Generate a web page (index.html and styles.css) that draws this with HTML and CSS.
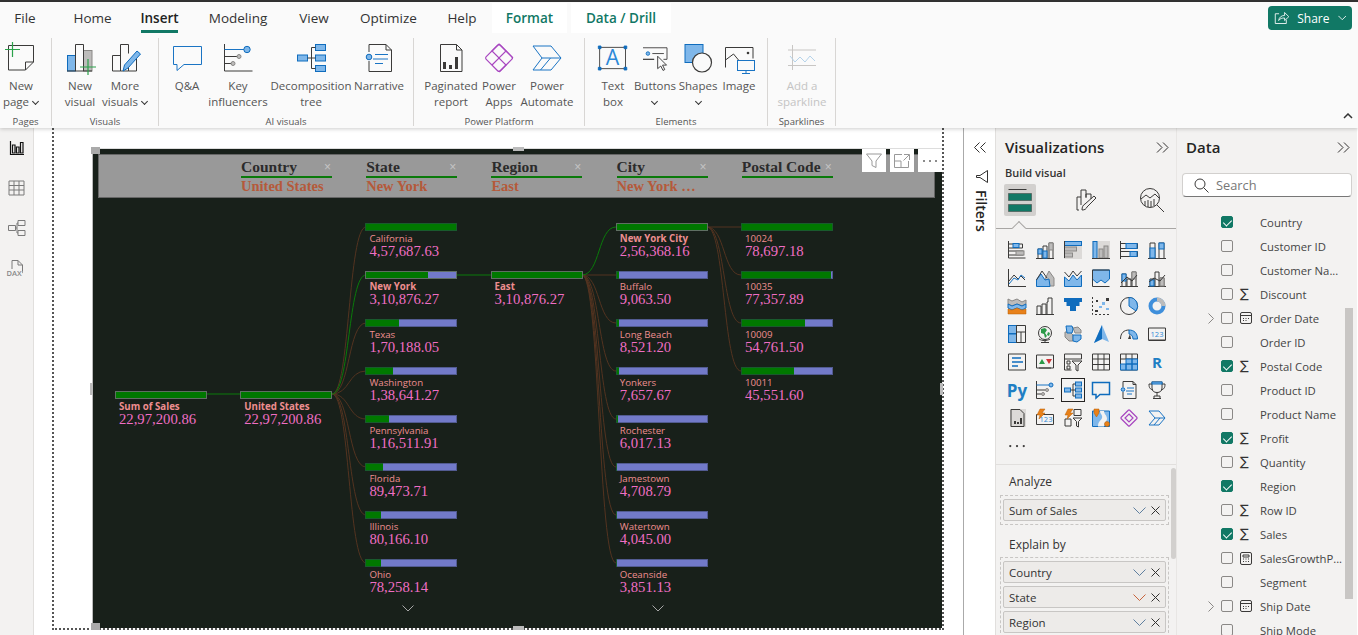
FILE: index.html
```html
<!DOCTYPE html>
<html lang="en">
<head>
    <meta charset="UTF-8">
    <title>Power BI Desktop - Insert</title>
    <link rel="stylesheet" href="styles.css">
</head>
<body>

<div class="topline"></div>

<header class="ribbon">
    <nav class="tabs">
        <span class="tab tab-file">File</span>
        <span class="tab tab-home">Home</span>
        <span class="tab tab-insert active">Insert</span>
        <span class="tab tab-modeling">Modeling</span>
        <span class="tab tab-view">View</span>
        <span class="tab tab-optimize">Optimize</span>
        <span class="tab tab-help">Help</span>
        <span class="tab tab-ctx tab-format">Format</span>
        <span class="tab tab-ctx tab-drill">Data / Drill</span>
        <button class="share">
            <svg width="18" height="16" viewBox="0 0 18 16"><path class="wh" d="M6 3H1.500v11.500h13V10M5.500 11c.5-4 3.500-6 7-6V1.500l5 5-5 4.500V8c-3 0-5.500.5-7 3z"/></svg>
            Share
            <svg width="10" height="6" viewBox="0 0 10 6"><path class="wh" d="M.5.500 5 5 9.500.5"/></svg>
        </button>
    </nav>
    <div class="groups">
        <section class="group g-pages">
            <div class="btns">
                <div class="rbtn w-42">
                    <svg class="ric" viewBox="0 0 32 32"><path class="d" d="M3.500 3.500h25V20l-8 8h-17zM20.500 28v-8h8"/><path class="plus" d="M0 7.500h15M7.500 0v15"/></svg>
                    <span>New<br>page <i class="chev"></i></span>
                </div>
            </div>
            <small>Pages</small>
        </section>
        <section class="group g-visuals">
            <div class="btns">
                <div class="rbtn w-44">
                    <svg class="ric" viewBox="0 0 32 32"><rect class="bl" x="3.500" y="13.500" width="8" height="15.500"/><rect class="gr" x="19.500" y="8.500" width="8.500" height="20.500"/><path class="d" d="M11.500 29V2.500h8V29M3 29h25"/><path class="plus" d="M16 25h16M24 17v16"/></svg>
                    <span>New<br>visual</span>
                </div>
                <div class="rbtn w-46">
                    <svg class="ric" viewBox="0 0 32 32"><path class="d" d="M11.500 13.500h-8V29h8V2.500h8v9M19.500 22v7h-8M27.500 16v13h-8"/><path class="bl" d="M14 29l1.500-6L28 9l3.500 3L19 26z"/></svg>
                    <span>More<br>visuals <i class="chev"></i></span>
                </div>
            </div>
            <small>Visuals</small>
        </section>
        <section class="group g-ai">
            <div class="btns">
                <div class="rbtn w-44">
                    <svg class="ric" viewBox="0 0 32 32"><path class="bs" d="M2.500 4.500h28v18H13l-7 6v-6H2.500z"/></svg>
                    <span>Q&amp;A</span>
                </div>
                <div class="rbtn w-58">
                    <svg class="ric" viewBox="0 0 32 32"><path class="d" d="M2.500 2v27h28M2.500 14.500h14M2.500 21.500h8"/><path class="bs" d="M2.500 7.500h20"/><circle class="bl" cx="25" cy="7.500" r="3.200"/><circle class="gr" cx="17" cy="14.500" r="2"/><circle class="gr" cx="11" cy="21.500" r="2"/></svg>
                    <span>Key<br>influencers</span>
                </div>
                <div class="rbtn w-88">
                    <svg class="ric" viewBox="0 0 32 32"><rect class="bl" x="2.500" y="13" width="10" height="6"/><rect class="bl" x="20.500" y="2.500" width="10" height="6"/><rect class="bl" x="20.500" y="13" width="10" height="6"/><rect class="bl" x="20.500" y="23.500" width="10" height="6"/><path class="d" d="M12.500 16h8M16.500 16V5.500h4M16.500 16v10.500h4"/></svg>
                    <span>Decomposition<br>tree</span>
                </div>
                <div class="rbtn w-48">
                    <svg class="ric" viewBox="0 0 32 32"><path class="d" d="M6 10V2.500h17l5.500 5.500v21.500H6V19M23 2.500V8h5.500"/><circle class="bl" cx="6" cy="15" r="2.800"/><path class="bs" d="M12 12.500h13M10 17h15M12 21.500h8"/></svg>
                    <span>Narrative</span>
                </div>
            </div>
            <small>AI visuals</small>
        </section>
        <section class="group g-platform">
            <div class="btns">
                <div class="rbtn w-60">
                    <svg class="ric" viewBox="0 0 32 32"><path class="d" d="M5.500 2.500h16l5.500 5.500v21.500H5.500zM21.500 2.500V8H27"/><path class="fd" d="M8 27v-7h3v7zM14 27v-4h3v4zM20 27V15h3v12z"/></svg>
                    <span>Paginated<br>report</span>
                </div>
                <div class="rbtn w-36">
                    <svg class="ric" viewBox="0 0 32 32"><g class="pa"><rect x="6" y="6" width="20" height="20" rx="2" transform="rotate(45 16 16)"/><path d="M16 2l7 7-7 7-7-7zM23 9l7 7M9 23l7-7 7 7-7 7"/></g></svg>
                    <span>Power<br>Apps</span>
                </div>
                <div class="rbtn w-60">
                    <svg class="ric" viewBox="0 0 32 32"><path class="bs" d="M2 4h18l10 12-10 12H2l9-12zM11 16h19M9.500 28l10-12"/></svg>
                    <span>Power<br>Automate</span>
                </div>
            </div>
            <small>Power Platform</small>
        </section>
        <section class="group g-elements">
            <div class="btns">
                <div class="rbtn w-36">
                    <svg class="ric" viewBox="0 0 36 32"><rect class="d" x="3" y="4" width="29" height="24"/><text class="tb-a" x="17.500" y="24">A</text><path class="hnd" d="M1.500 2.500h3v3h-3zM30.500 2.500h3v3h-3zM1.500 26.500h3v3h-3zM30.500 26.500h3v3h-3z"/></svg>
                    <span>Text<br>box</span>
                </div>
                <div class="rbtn w-48">
                    <svg class="ric" viewBox="0 0 36 32"><path class="d" d="M4.500 4.500h27v13h-4M17 17.500H4.500z"/><circle class="bl" cx="10" cy="11" r="2"/><path class="d" d="M15 11h13"/><path class="cur" d="M21 14v14l3.500-3 2.500 5 2-1-2.500-5H31z"/></svg>
                    <span>Buttons<br><i class="chev"></i></span>
                </div>
                <div class="rbtn w-38">
                    <svg class="ric" viewBox="0 0 32 32"><rect class="bl" x="3" y="2.500" width="18" height="18"/><circle class="sc" cx="20" cy="20.500" r="9.500"/></svg>
                    <span>Shapes<br><i class="chev"></i></span>
                </div>
                <div class="rbtn w-44">
                    <svg class="ric" viewBox="0 0 32 32"><path class="d" d="M2.500 25.500v-20h27.500v11M2.500 18l8-6 5 6"/><circle class="fd" cx="25" cy="11" r="1.300"/><rect class="mon" x="14.500" y="18.500" width="17" height="10"/><path class="bs" d="M23 28.500v3M19 31.500h8"/></svg>
                    <span>Image</span>
                </div>
            </div>
            <small>Elements</small>
        </section>
        <section class="group g-sparks">
            <div class="btns">
                <div class="rbtn w-60 off">
                    <svg class="ric" viewBox="0 0 32 32"><path class="off-l" d="M6.500 3v25M2 8h28M2 23.500h28"/><path class="off-b" d="M4 14l5 6 5-5 5 5 5-6 5 5"/></svg>
                    <span>Add a<br>sparkline</span>
                </div>
            </div>
            <small>Sparklines</small>
        </section>
        <svg class="collapse" width="10" height="6" viewBox="0 0 10 6"><path d="M1 5l4-4 4 4"/></svg>
    </div>
</header>

<main class="main">
    <aside class="rail">
        <svg width="16" height="16" viewBox="0 0 16 16"><path class="k" d="M1.500 1v13.500H15M3.500 13V5h2.500v8zM7.500 13V7h2.500v6zM11.500 13V2.500H14V13z"/></svg>
        <svg width="17" height="16" viewBox="0 0 17 16"><path class="r" d="M1 1h15v14H1zM1 5.500h15M1 10h15M6 1v14M11 1v14"/></svg>
        <svg width="18" height="16" viewBox="0 0 18 16"><path class="r" d="M.5 5.500h7v5h-7zM10 .5h7v5h-7zM10 10.500h7v5h-7zM7.500 8H9V3h1M9 8v5h1"/></svg>
        <div class="dax">
            <svg width="18" height="17" viewBox="0 0 18 17"><path class="r" d="M4 10V.5h6l4.500 4.500v6.500c0 1-.5 2-1.500 2.500M10 .5V5h4.500"/></svg>
            <span>DAX</span>
        </div>
    </aside>

    <section class="canvas">
        <div class="page">
            <div class="visual">
                <i class="h h-tl"></i><i class="h h-bl"></i><i class="h h-tm"></i><i class="h h-bm"></i><i class="h h-lm"></i><i class="h h-rm"></i>

                <div class="vtools">
                    <span><svg width="16" height="16" viewBox="0 0 16 16"><path d="M.5 1h15L10 8v6.500l-4-2V8z"/></svg></span>
                    <span><svg width="16" height="14" viewBox="0 0 16 14"><path d="M8 .5H.5v13h14V7M.5 7H7v6.500M10 .5h5.500V6M15 1L9.500 6.500"/></svg></span>
                    <span><svg width="16" height="4" viewBox="0 0 16 4"><circle class="fg" cx="2" cy="2" r="1"/><circle class="fg" cx="8" cy="2" r="1"/><circle class="fg" cx="14" cy="2" r="1"/></svg></span>
                </div>

                <div class="crumbs">
                    <div class="crumb"><div class="crumb-name"><b>Country</b><i>&times;</i></div><div class="crumb-val">United States</div></div>
                    <div class="crumb"><div class="crumb-name"><b>State</b><i>&times;</i></div><div class="crumb-val">New York</div></div>
                    <div class="crumb"><div class="crumb-name"><b>Region</b><i>&times;</i></div><div class="crumb-val">East</div></div>
                    <div class="crumb"><div class="crumb-name"><b>City</b><i>&times;</i></div><div class="crumb-val">New York &hellip;</div></div>
                    <div class="crumb"><div class="crumb-name"><b>Postal Code</b><i>&times;</i></div></div>
                </div>

                <svg class="links" viewBox="92 148 851 480">
                    <g class="lb">
                        <path d="M332 394C350 394 348 227 366 227"/>
                        <path d="M332 394C350 394 348 323 366 323"/>
                        <path d="M332 394C350 394 348 371 366 371"/>
                        <path d="M332 394C350 394 348 419 366 419"/>
                        <path d="M332 394C350 394 348 467 366 467"/>
                        <path d="M332 394C350 394 348 515 366 515"/>
                        <path d="M332 394C350 394 348 563 366 563"/>
                        <path d="M582 275H616"/>
                        <path d="M582 275C600 275 598 323 616 323"/>
                        <path d="M582 275C600 275 598 371 616 371"/>
                        <path d="M582 275C600 275 598 419 616 419"/>
                        <path d="M582 275C600 275 598 467 616 467"/>
                        <path d="M582 275C600 275 598 515 616 515"/>
                        <path d="M582 275C600 275 598 563 616 563"/>
                        <path d="M707 227H741"/>
                        <path d="M707 227C725 227 723 275 741 275"/>
                        <path d="M707 227C725 227 723 323 741 323"/>
                        <path d="M707 227C725 227 723 371 741 371"/>
                    </g>
                    <g class="lg">
                        <path d="M207 394H240"/>
                        <path d="M332 394C350 394 348 275 366 275"/>
                        <path d="M457 275H491"/>
                        <path d="M582 275C600 275 598 227 616 227"/>
                    </g>
                </svg>

                <div class="tree">
                    <div class="col col-root">
                        <div class="item sel"><div class="bar"><div class="fill" style="width:100%"></div></div><p class="lbl"><b>Sum of Sales</b></p><p class="val">22,97,200.86</p></div>
                    </div>
                    <div class="col col-root">
                        <div class="item sel"><div class="bar"><div class="fill" style="width:100%"></div></div><p class="lbl"><b>United States</b></p><p class="val">22,97,200.86</p></div>
                    </div>
                    <div class="col">
                        <div class="item"><div class="bar"><div class="fill" style="width:100%"></div></div><p class="lbl">California</p><p class="val">4,57,687.63</p></div>
                        <div class="item sel"><div class="bar"><div class="fill" style="width:68%"></div></div><p class="lbl"><b>New York</b></p><p class="val">3,10,876.27</p></div>
                        <div class="item"><div class="bar"><div class="fill" style="width:37%"></div></div><p class="lbl">Texas</p><p class="val">1,70,188.05</p></div>
                        <div class="item"><div class="bar"><div class="fill" style="width:30%"></div></div><p class="lbl">Washington</p><p class="val">1,38,641.27</p></div>
                        <div class="item"><div class="bar"><div class="fill" style="width:25.5%"></div></div><p class="lbl">Pennsylvania</p><p class="val">1,16,511.91</p></div>
                        <div class="item"><div class="bar"><div class="fill" style="width:19.5%"></div></div><p class="lbl">Florida</p><p class="val">89,473.71</p></div>
                        <div class="item"><div class="bar"><div class="fill" style="width:17.5%"></div></div><p class="lbl">Illinois</p><p class="val">80,166.10</p></div>
                        <div class="item"><div class="bar"><div class="fill" style="width:17%"></div></div><p class="lbl">Ohio</p><p class="val">78,258.14</p></div>
                    </div>
                    <div class="col col-east">
                        <div class="item sel"><div class="bar"><div class="fill" style="width:100%"></div></div><p class="lbl"><b>East</b></p><p class="val">3,10,876.27</p></div>
                    </div>
                    <div class="col">
                        <div class="item sel"><div class="bar"><div class="fill" style="width:100%"></div></div><p class="lbl"><b>New York City</b></p><p class="val">2,56,368.16</p></div>
                        <div class="item"><div class="bar"><div class="fill" style="width:3.5%"></div></div><p class="lbl">Buffalo</p><p class="val">9,063.50</p></div>
                        <div class="item"><div class="bar"><div class="fill" style="width:3.3%"></div></div><p class="lbl">Long Beach</p><p class="val">8,521.20</p></div>
                        <div class="item"><div class="bar"><div class="fill" style="width:3%"></div></div><p class="lbl">Yonkers</p><p class="val">7,657.67</p></div>
                        <div class="item"><div class="bar"><div class="fill" style="width:2.3%"></div></div><p class="lbl">Rochester</p><p class="val">6,017.13</p></div>
                        <div class="item"><div class="bar"><div class="fill" style="width:1.8%"></div></div><p class="lbl">Jamestown</p><p class="val">4,708.79</p></div>
                        <div class="item"><div class="bar"><div class="fill" style="width:1.6%"></div></div><p class="lbl">Watertown</p><p class="val">4,045.00</p></div>
                        <div class="item"><div class="bar"><div class="fill" style="width:1.5%"></div></div><p class="lbl">Oceanside</p><p class="val">3,851.13</p></div>
                    </div>
                    <div class="col">
                        <div class="item"><div class="bar"><div class="fill" style="width:100%"></div></div><p class="lbl">10024</p><p class="val">78,697.18</p></div>
                        <div class="item"><div class="bar"><div class="fill" style="width:98.3%"></div></div><p class="lbl">10035</p><p class="val">77,357.89</p></div>
                        <div class="item"><div class="bar"><div class="fill" style="width:69.6%"></div></div><p class="lbl">10009</p><p class="val">54,761.50</p></div>
                        <div class="item"><div class="bar"><div class="fill" style="width:57.9%"></div></div><p class="lbl">10011</p><p class="val">45,551.60</p></div>
                    </div>
                </div>
                <svg class="more more-a" width="12" height="7" viewBox="0 0 12 7"><path d="M.5.500 6 6 11.500.5"/></svg>
                <svg class="more more-b" width="12" height="7" viewBox="0 0 12 7"><path d="M.5.500 6 6 11.500.5"/></svg>
            </div>
        </div>
    </section>

    <aside class="filters">
        <svg width="12" height="11" viewBox="0 0 12 11"><path class="n" d="M5.500.5l-5 5 5 5M11.500.5l-5 5 5 5"/></svg>
        <svg class="f-ico" width="12" height="13" viewBox="0 0 12 13"><path class="n" d="M11.500.5v12L4 7.500H.5v-2H4z"/></svg>
        <span class="f-text">Filters</span>
    </aside>

    <aside class="viz">
        <div class="panel-head"><h2>Visualizations</h2><svg width="13" height="11" viewBox="0 0 13 11"><path class="n" d="M1 .5l5 5-5 5M7 .5l5 5-5 5"/></svg></div>
        <h3 class="build">Build visual</h3>
        <div class="viz-tabs">
            <span class="vt vt-on"><svg width="24" height="24" viewBox="0 0 24 24"><path class="d" d="M.5 1.500h18"/><rect class="wf" x=".5" y="5.500" width="23" height="7"/><rect class="wf" x=".5" y="16.500" width="23" height="7"/></svg></span>
            <span class="vt"><svg width="22" height="24" viewBox="0 0 22 24"><path class="d" d="M4 22H2V9h4V2h5v7M11 10V6h5v5M6 9v8"/><path class="d" d="M7 22c3 0 4-1 5-3l9-9-2-2-9 8c-2 1-3 3-3 6z"/></svg></span>
            <span class="vt"><svg width="26" height="26" viewBox="0 0 26 26"><circle class="d" cx="11" cy="11" r="9.500"/><path class="d" d="M18 18l7 7M2 12l5-4 4 3 5-4 4 4"/><path class="d" d="M6 14v5M9 13v7M12 14v6M15 12v7"/></svg></span>
        </div>
        <div class="vline"><i></i></div>

        <div class="vgrid">
            <span><svg viewBox="0 0 18 18"><path class="d" d="M.5 0v17h17M.5 3h14v4H.5M.5 10h15v4H.5"/><rect class="bl" x="5" y="2.500" width="6" height="4"/><rect class="gr" x="8" y="10" width="8" height="4"/></svg></span>
            <span><svg viewBox="0 0 18 18"><path class="d" d="M0 17.500h18M2 17V8h4v9M7 17V5h4v12M13 17V2h4v15"/><rect class="bl" x="2" y="8" width="4" height="5"/><rect class="bl" x="7" y="10" width="4" height="7"/><rect class="gr" x="13" y="2" width="4" height="7"/></svg></span>
            <span><svg viewBox="0 0 18 18"><rect class="gb" width="18" height="18"/><rect class="bl" x=".5" y=".5" width="17" height="4"/><rect class="gr" x=".5" y="6" width="12" height="4"/><rect class="gr" x=".5" y="12" width="8" height="4"/><path class="d" d="M.5 0v17"/></svg></span>
            <span><svg viewBox="0 0 18 18"><rect class="gb" width="18" height="18"/><rect class="bl" x="1" y=".5" width="4" height="17"/><rect class="gr" x="7" y="8" width="4" height="9"/><rect class="gr" x="12" y="5" width="4" height="12"/><path class="d" d="M0 17.500h18"/></svg></span>
            <span><svg viewBox="0 0 18 18"><path class="d" d="M.5 0v18M.5 2.500h17v5H.5M.5 10.500h17v5H.5"/><rect class="bl" x="6" y="2.500" width="11" height="5"/><rect class="bl" x="10" y="10.500" width="7" height="5"/></svg></span>
            <span><svg viewBox="0 0 18 18"><path class="d" d="M0 17.500h18M2 17V2h5v15M11 17V2h5v15"/><rect class="bl" x="2" y="7" width="5" height="10"/><rect class="bl" x="11" y="2" width="5" height="6"/></svg></span>

            <span><svg viewBox="0 0 18 18"><path class="d" d="M.5 0v17.500H18M1 12l5-6 4 4 3-3 4 4"/><path class="bs" d="M1 15l5-6 4 2 3-5 4 3"/></svg></span>
            <span><svg viewBox="0 0 18 18"><path class="gr" d="M9 10l4-8 5 7v8H9z"/><path class="bl" d="M.5 17.500v-7L5 5l4 6 4-1 1 7.500z"/><path class="d" d="M.5 11L6 2l5 7"/></svg></span>
            <span><svg viewBox="0 0 18 18"><path class="bl" d="M.5 8L5 12l4-6 4 5 4.500-5v11.500H.5z"/><path class="d" d="M.5 3L5 8l4-6 4 5 4.500-5"/></svg></span>
            <span><svg viewBox="0 0 18 18"><path class="bl" d="M.5 1v9L5 14l4-3 4 3 4.500-4V1z"/><path class="d" d="M.5 1h17M.5 1v16.500h17"/></svg></span>
            <span><svg viewBox="0 0 18 18"><path class="d" d="M0 17.500h18M2 17V5h4v12M7 17V10h4v7M12 17V3h4v14"/><rect class="bl" x="2" y="5" width="4" height="7"/><rect class="gr" x="12" y="3" width="4" height="7"/><path class="d" d="M1 14l6-6 5 4 5-6"/></svg></span>
            <span><svg viewBox="0 0 18 18"><path class="d" d="M0 17.500h18M2 17v-7h4v7M7 17V3h4v14M12 17V9h4v8"/><rect class="gr" x="12" y="9" width="4" height="8"/><rect class="bl" x="2" y="11" width="4" height="6"/><path class="d" d="M1 13l5-4 6 3 5-6"/></svg></span>

            <span><svg viewBox="0 0 18 18"><path class="gr" d="M0 2l4 2 5-2 5 3 4-2v4l-4 2-5-2-5 2-4-2z"/><path class="bl" d="M0 7l4 2 5-2 5 2 4-2v4l-4 2-5-2-5 2-4-2z"/><path class="or" d="M0 12l4 1 5-2 5 2 4-1v5H0z"/></svg></span>
            <span><svg viewBox="0 0 18 18"><path class="d" d="M0 17.500h18M1 17V9h4v8M6 17V7h4v10M11 17V5h1M16 17V1h-4v4"/></svg></span>
            <span><svg viewBox="0 0 18 18"><path class="fb" d="M0 1h18v4h-2.500v4H12v5H6V9H2.500V5H0z"/></svg></span>
            <span><svg viewBox="0 0 18 18"><path class="d" d="M.5 0v17.500H18" stroke-dasharray="2 2"/><rect class="fd" x="3" y="13" width="3" height="2"/><rect class="fl" x="7" y="9" width="3" height="2"/><rect class="fl" x="10" y="5" width="3" height="3"/><rect class="fd" x="14" y="1" width="3" height="3"/><rect class="fl" x="14" y="11" width="3" height="2"/><rect class="fd" x="4" y="3" width="2" height="2"/></svg></span>
            <span><svg viewBox="0 0 18 18"><circle class="d" cx="9" cy="9" r="8.500"/><path class="bl" d="M9 .5A8.500 8.500 0 0 1 16 14L9 9z"/></svg></span>
            <span><svg viewBox="0 0 18 18"><circle class="ring" cx="9" cy="9" r="6.500"/><path class="ring2" d="M9 2.500A6.500 6.500 0 0 1 15.500 9"/></svg></span>

            <span><svg viewBox="0 0 18 18"><rect class="bl" x=".5" y=".5" width="8" height="8"/><rect class="bl" x=".5" y="9" width="8" height="8.500"/><path class="d" d="M8.500.5h9v17h-9zM8.500 7h9M13 7v10.500"/></svg></span>
            <span><svg viewBox="0 0 18 18"><circle class="d" cx="9" cy="8" r="6.500"/><path class="gn" d="M5 4l4-1 2 2-2 3 2 3-2 2-1-4-3-1zM12 7l2 1-1 3-2-1z"/><path class="d" d="M3 14c3 2 8 2 11 0M9 15v2M5 17.500h8"/></svg></span>
            <span><svg viewBox="0 0 18 18"><path class="gr" d="M1 7h5l3 3v6H5l-2-2-2-2zM9 3l5-1 3 3v3h-6z"/><path class="bl" d="M2 1h6l1 3-1 4H3zM9 10h8v4l-4 3-4-1z"/></svg></span>
            <span><svg viewBox="0 0 18 18"><path class="fl" d="M10 0l7 17-7-3-8 4z"/><path class="fb" d="M10 0v14l-8 4z"/></svg></span>
            <span><svg viewBox="0 0 18 18"><path class="d" d="M.5 14C.5 8 4 5 9 5"/><path class="bl" d="M9 5c5 0 8.500 3 8.500 9H13c0-3-2-5-4-5z"/><path class="fd" d="M8 14l2-5 1 5z"/></svg></span>
            <span><svg viewBox="0 0 18 18"><path class="d" d="M.5 3h17v12H.5zM.5 15.500h17"/><text class="t123" x="9" y="12">123</text></svg></span>

            <span><svg viewBox="0 0 18 18"><path class="d" d="M.5 1h17v16H.5z"/><path class="bs2" d="M4 5h9M4 9h11M4 13h6"/></svg></span>
            <span><svg viewBox="0 0 18 18"><path class="d" d="M.5 2h17v13H.5zM3 15h12"/><path class="gn" d="M3 11l3-5 3 5z"/><path class="rd" d="M10 6h6l-3 5z"/></svg></span>
            <span><svg viewBox="0 0 18 18"><path class="d" d="M.5 1h17v5H.5M.5 1v16h7M3 8h3v3H3zM3 13h3v3H3z"/><path class="d" d="M8 8h10l-4 4v6l-2-1v-5z"/></svg></span>
            <span><svg viewBox="0 0 18 18"><path class="d" d="M.5 1h17v16H.5zM.5 6h17M.5 11.500h17M6 1v16M12 1v16"/></svg></span>
            <span><svg viewBox="0 0 18 18"><path class="d" d="M.5 1h17v16H.5zM.5 6h17M6 1v5M12 1v5"/><path class="bl" d="M.5 11H6v6H.5zM6 6h6v5H6zM12 6h5.500v5H12zM6 11h6v6H6zM12 11h5.500v6H12z"/></svg></span>
            <span class="letter">R</span>

            <span class="letter letter-py">Py</span>
            <span><svg viewBox="0 0 18 18"><path class="d" d="M.5 0v17.500H18M.5 9h9M.5 13h5"/><path class="bs" d="M.5 4h13"/><circle class="bl" cx="15" cy="4" r="2"/><circle class="gr" cx="11" cy="9" r="1.500"/><circle class="gr" cx="7" cy="13" r="1.500"/></svg></span>
            <span class="picked"><svg viewBox="0 0 18 18"><rect class="bl" x=".5" y="7" width="6" height="4"/><rect class="bl" x="11.500" y="1" width="6" height="4"/><rect class="bl" x="11.500" y="7" width="6" height="4"/><rect class="bl" x="11.500" y="13" width="6" height="4"/><path class="d" d="M6.500 9h5M9 9V3h2.500M9 9v6h2.500"/></svg></span>
            <span><svg viewBox="0 0 18 18"><path class="bs2" d="M.5 1.500h17v12H8L4 17v-3.500H.5z"/></svg></span>
            <span><svg viewBox="0 0 18 18"><path class="d" d="M3 6V.5h10l3 3v14H3V11M13 .5v3h3"/><circle class="bl" cx="3" cy="8.500" r="1.800"/><path class="bs" d="M7 7h7M6 10h8M7 13h5"/></svg></span>
            <span><svg viewBox="0 0 18 18"><path class="d" d="M4 1h10v6c0 3-2 4.500-5 4.500S4 10 4 7zM4 3H1c0 4 1 5 4 6M14 3h3c0 4-1 5-4 6M9 11.500V15M5 17.500h8M6 17v-2h6v2"/><rect class="bl" x="4" y="1" width="10" height="2"/></svg></span>

            <span><svg viewBox="0 0 18 18"><rect class="gb" x="2" width="16" height="18"/><path class="d" d="M3 .5h9l4 4v13H3z"/><path class="fd" d="M6 15v-3h2v3zM9 15v-2h2v2zM12 15V9h2v6z"/></svg></span>
            <span><svg viewBox="0 0 18 18"><path class="d" d="M.5 5.500h17v10H.5z"/><text class="t123" x="10" y="13">123</text><path class="or" d="M4 0h5L6 4h3L3 10l1-4H1z"/></svg></span>
            <span><svg viewBox="0 0 18 18"><path class="d" d="M10 .5h7v6h-7zM1 10h6v7H1zM9 9h9l-3.500 3.500V18l-2-1v-4.500z"/><path class="or" d="M4 0h5L6 4h3L3 10l1-4H1z"/></svg></span>
            <span><svg viewBox="0 0 18 18"><path class="bl" d="M.5 2h17v15.500H.5z"/><path class="wp" d="M8 2c0 3 3 4 2 7s-4 3-4 8.500h6c0-4 3-5 3-8S12 5 12 2z"/><path class="or" d="M2 0h5v4L4.500 8 2 4z"/><circle class="or" cx="15" cy="15" r="2.500"/></svg></span>
            <span><svg viewBox="0 0 18 18"><g class="pa"><rect x="3" y="3" width="12" height="12" rx="1" transform="rotate(45 9 9)"/><path d="M9 5l4 4-4 4-4-4z"/></g></svg></span>
            <span><svg viewBox="0 0 18 18"><path class="bs" d="M1 2h10l6 7-6 7H1l6-7zM7 9h10M6 16l6-7"/></svg></span>

            <span><svg width="16" height="4" viewBox="0 0 16 4"><circle class="fd" cx="2" cy="2" r="1"/><circle class="fd" cx="8" cy="2" r="1"/><circle class="fd" cx="14" cy="2" r="1"/></svg></span>
        </div>

        <div class="fields">
            <h4>Analyze</h4>
            <div class="well">
                <div class="pill"><span>Sum of Sales</span><svg width="13" height="7" viewBox="0 0 13 7"><path class="ch" d="M.5.500l6 6 6-6"/></svg><svg class="pill-x" width="9" height="9" viewBox="0 0 9 9"><path class="n" d="M.5.500l8 8M8.500.5l-8 8"/></svg></div>
            </div>
            <h4 class="h4-next">Explain by</h4>
            <div class="well well-open">
                <div class="pill"><span>Country</span><svg width="13" height="7" viewBox="0 0 13 7"><path class="ch" d="M.5.500l6 6 6-6"/></svg><svg class="pill-x" width="9" height="9" viewBox="0 0 9 9"><path class="n" d="M.5.500l8 8M8.500.5l-8 8"/></svg></div>
                <div class="pill"><span>State</span><svg width="13" height="7" viewBox="0 0 13 7"><path class="bo" d="M.5.500l6 6 6-6"/></svg><svg class="pill-x" width="9" height="9" viewBox="0 0 9 9"><path class="n" d="M.5.500l8 8M8.500.5l-8 8"/></svg></div>
                <div class="pill"><span>Region</span><svg width="13" height="7" viewBox="0 0 13 7"><path class="ch" d="M.5.500l6 6 6-6"/></svg><svg class="pill-x" width="9" height="9" viewBox="0 0 9 9"><path class="n" d="M.5.500l8 8M8.500.5l-8 8"/></svg></div>
            </div>
            <i class="sb sb-viz"></i>
        </div>
    </aside>

    <aside class="data">
        <div class="panel-head"><h2>Data</h2><svg width="13" height="11" viewBox="0 0 13 11"><path class="n" d="M1 .5l5 5-5 5M7 .5l5 5-5 5"/></svg></div>
        <div class="search">
            <svg width="15" height="15" viewBox="0 0 15 15"><circle class="d" cx="6" cy="6" r="5"/><path class="d" d="M9.500 9.500l5 5"/></svg>
            <span>Search</span>
        </div>
        <ul class="list">
            <li><u class="cb on"></u><span class="ty"></span>Country</li>
            <li><u class="cb"></u><span class="ty"></span>Customer ID</li>
            <li><u class="cb"></u><span class="ty"></span>Customer Na...</li>
            <li><u class="cb"></u><span class="ty">&sum;</span>Discount</li>
            <li><svg class="exp" width="6" height="11" viewBox="0 0 6 11"><path d="M.5.500l5 5-5 5"/></svg><u class="cb"></u><span class="ty"><svg width="12" height="12" viewBox="0 0 12 12"><path class="d" d="M2 .5h8q1.500 0 1.500 1.500v8q0 1.500-1.500 1.500H2Q.5 11.500.5 10V2Q.5.500 2 .5zM.5 3.500h11M3 6.500h1M5.500 6.500h1M8 6.500h1M3 8.500h1M5.500 8.500h1"/></svg></span>Order Date</li>
            <li><u class="cb"></u><span class="ty"></span>Order ID</li>
            <li><u class="cb on"></u><span class="ty">&sum;</span>Postal Code</li>
            <li><u class="cb"></u><span class="ty"></span>Product ID</li>
            <li><u class="cb"></u><span class="ty"></span>Product Name</li>
            <li><u class="cb on"></u><span class="ty">&sum;</span>Profit</li>
            <li><u class="cb"></u><span class="ty">&sum;</span>Quantity</li>
            <li><u class="cb on"></u><span class="ty"></span>Region</li>
            <li><u class="cb"></u><span class="ty">&sum;</span>Row ID</li>
            <li><u class="cb on"></u><span class="ty">&sum;</span>Sales</li>
            <li><u class="cb"></u><span class="ty"><svg width="12" height="13" viewBox="0 0 12 13"><path class="d" d="M2 .5h8q1.500 0 1.500 1.500v9q0 1.500-1.500 1.500H2Q.5 12.500.5 11V2Q.5.500 2 .5zM3 3h6v2H3zM3 7h1M5.500 7h1M8 7h1M3 9.500h1M5.500 9.500h1M8 9.500h1"/></svg></span>SalesGrowthP...</li>
            <li><u class="cb"></u><span class="ty"></span>Segment</li>
            <li><svg class="exp" width="6" height="11" viewBox="0 0 6 11"><path d="M.5.500l5 5-5 5"/></svg><u class="cb"></u><span class="ty"><svg width="12" height="12" viewBox="0 0 12 12"><path class="d" d="M2 .5h8q1.500 0 1.500 1.500v8q0 1.500-1.500 1.500H2Q.5 11.500.5 10V2Q.5.500 2 .5zM.5 3.500h11M3 6.500h1M5.500 6.500h1M8 6.500h1M3 8.500h1M5.500 8.500h1"/></svg></span>Ship Date</li>
            <li><u class="cb"></u><span class="ty"></span>Ship Mode</li>
        </ul>
        <i class="sb sb-data"></i>
    </aside>
</main>

</body>
</html>
```

FILE: styles.css
```css
* {
    box-sizing: border-box;
}

html, body {
    height: 635px;
    margin: 0;
    overflow: hidden;
}

body {
    display: flex;
    flex-direction: column;
    font-family: "Open Sans", "Noto Sans", sans-serif;
    font-size: 12px;
    color: #444;
    background: #fff;
}

p, h2, h3, h4, ul {
    margin: 0;
    padding: 0;
}

/* shared svg paints */
svg { display: block; }
.d { fill: none; stroke: #3b3a39; stroke-width: 1; }
.bl { fill: #7fb7ea; stroke: #0f6cbd; stroke-width: 1; }
.bs { fill: none; stroke: #1a74c4; stroke-width: 1; }
.bs2 { fill: none; stroke: #0f6cbd; stroke-width: 1.5; }
.bo { fill: none; stroke: #c8643c; stroke-width: 1; }
.ch { fill: none; stroke: #5f7f9f; stroke-width: 1; }
.gr { fill: #bdbcbb; stroke: #8a8886; stroke-width: 1; }
.gb { fill: #dcdad8; }
.fd { fill: #3b3a39; }
.fg { fill: #666; }
.fl { fill: #7fb7ea; }
.fb { fill: #0f6cbd; }
.gn { fill: #2b9a48; }
.rd { fill: #d13438; }
.or { fill: #e8811a; stroke: #b85c00; stroke-width: .5; }
.wp { fill: #f3f2f1; }
.wh { fill: none; stroke: #fff; stroke-width: 1; }
.n { fill: none; stroke: #323130; stroke-width: 1; }
.k { fill: none; stroke: #111; stroke-width: 1.2; }
.r { fill: none; stroke: #7a7a7a; stroke-width: 1; }
.pa rect, .pa path { fill: none; stroke: #a846c0; stroke-width: 1.2; }
.plus { fill: none; stroke: #2aa24a; stroke-width: 1.2; }
.hnd { fill: #0f6cbd; stroke: #0f6cbd; }
.cur { fill: #fafafa; stroke: #323130; stroke-width: 1; }
.sc { fill: #fafafa; stroke: #3b3a39; stroke-width: 1.2; }
.mon { fill: #fafafa; stroke: #1a74c4; stroke-width: 1; }
.ring { fill: none; stroke: #3f8fdb; stroke-width: 4; }
.ring2 { fill: none; stroke: #bdbcbb; stroke-width: 4; }
.wf { fill: #117865; stroke: #3b3a39; stroke-width: 1; stroke-dasharray: 1 1; }
.off-l { fill: none; stroke: #c8c6c4; stroke-width: 1; }
.off-b { fill: none; stroke: #b5d3ea; stroke-width: 1; }
.tb-a { font: 24px "Open Sans", sans-serif; fill: #2b88d8; text-anchor: middle; }
.t123 { font: 7.5px "Open Sans", sans-serif; fill: #2b88d8; text-anchor: middle; }

/* ribbon */
.topline {
    height: 2px;
    background: #333;
}

.ribbon {
    height: 126px;
    background: #fafafa;
    box-shadow: 0 1px 4px rgba(0, 0, 0, 0.2);
    position: relative;
    z-index: 2;
}

.tabs {
    display: flex;
    height: 34px;
    align-items: flex-start;
    position: relative;
    font-size: 13.5px;
    color: #333;
}

.tab {
    display: flex;
    align-items: center;
    justify-content: center;
    height: 31px;
}

.tab-file { width: 50px; }
.tab-home { width: 47px; margin-left: 19px; }
.tab-insert { width: 37px; margin-left: 25px; }
.tab-modeling { width: 60px; margin-left: 30px; }
.tab-view { width: 30px; margin-left: 31px; }
.tab-optimize { width: 57px; margin-left: 31px; }
.tab-help { width: 28px; margin-left: 31px; }
.tab-ctx {
    background: #fff;
    color: #117865;
    font-weight: 600;
    height: 30px;
    margin-top: 1px;
}
.tab-format { width: 75px; margin-left: 16px; }
.tab-drill { width: 100px; margin-left: 4px; }

.active {
    padding-top: 3px;
    font-weight: 600;
    color: #222;
    border-bottom: 3px solid #117865;
}

.share {
    position: absolute;
    left: 1268px;
    top: 4px;
    width: 84px;
    height: 24px;
    display: flex;
    align-items: center;
    gap: 8px;
    padding: 0 6px;
    background: #117865;
    color: #fff;
    border: 0;
    border-radius: 4px;
    font: 12px "Open Sans", sans-serif;
}

.groups {
    display: flex;
    height: 88px;
    margin-top: 2px;
    position: relative;
}

.group {
    display: flex;
    flex-direction: column;
    border-right: 1px solid #d8d6d4;
}

.group small {
    display: block;
    text-align: center;
    font-size: 9.5px;
    line-height: 10px;
    color: #555;
    margin-top: auto;
    margin-bottom: -1px;
}

.btns {
    display: flex;
    padding-top: 4px;
}

.g-pages { width: 52px; }
.g-visuals { width: 107px; }
.g-ai { width: 255px; }
.g-platform { width: 171px; }
.g-elements { width: 183px; }
.g-sparks { width: 68px; }

.g-visuals .btns { padding-left: 6px; }
.g-ai .btns { padding-left: 6px; }
.g-platform .btns { padding-left: 7px; }
.g-elements .btns { padding-left: 10px; }
.g-sparks .btns { padding-left: 4px; }

.rbtn {
    display: flex;
    flex-direction: column;
    align-items: center;
    text-align: center;
    font-size: 11.5px;
    line-height: 16px;
    color: #555;
    white-space: nowrap;
}

.rbtn span {
    margin-top: 4px;
}

.ric {
    width: 32px;
    height: 32px;
    overflow: visible;
}

.off { color: #c4c4c4; }

.w-36 { width: 36px; }
.w-38 { width: 38px; }
.w-42 { width: 42px; }
.w-44 { width: 44px; }
.w-46 { width: 46px; }
.w-48 { width: 48px; }
.w-58 { width: 58px; }
.w-60 { width: 60px; }
.w-88 { width: 88px; }

.chev {
    display: inline-block;
    width: 5px;
    height: 5px;
    margin: 0 1px 2px 1px;
    border-right: 1px solid #333;
    border-bottom: 1px solid #333;
    transform: rotate(45deg);
}

.collapse {
    position: absolute;
    right: 5px;
    bottom: 7px;
}

.collapse path {
    fill: none;
    stroke: #333;
    stroke-width: 1.5;
}

/* main area */
.main {
    display: flex;
    flex: 1;
    min-height: 0;
}

.rail {
    width: 34px;
    flex: none;
    padding-top: 12px;
    display: flex;
    flex-direction: column;
    align-items: center;
    gap: 24px;
    background: #f3f2f1;
    border-right: 1px solid #e1dfdd;
}

.dax {
    position: relative;
    height: 17px;
}

.dax span {
    position: absolute;
    left: -1px;
    top: 9px;
    font-size: 7.5px;
    font-weight: 600;
    line-height: 8px;
    color: #888;
    background: #f3f2f1;
}

.canvas {
    width: 929px;
    flex: none;
    background: #fff;
    overflow: hidden;
}

.page {
    width: 892px;
    height: 502px;
    margin-left: 18px;
    border-left: 2px dotted #555;
    border-right: 2px dotted #555;
    border-bottom: 2px dotted #555;
    padding: 20px 0 0 38px;
}

.visual {
    position: relative;
    height: 480px;
    background: #18201a;
    border-top: 1px solid #ddd;
    border-left: 1px solid #bbb;
    font-family: "Liberation Serif", serif;
}

.h {
    position: absolute;
    background: #bbb;
}
.h-tl, .h-bl {
    left: -2px;
    width: 9px;
    height: 7px;
    background: #aaa;
}
.h-tl { top: -2px; }
.h-bl { bottom: -2px; }
.h-tm, .h-bm { left: 420px; width: 11px; height: 4px; }
.h-tm { top: -2px; }
.h-bm { bottom: -2px; }
.h-lm, .h-rm { top: 234px; width: 3px; height: 12px; }
.h-lm { left: -3px; }
.h-rm { right: -1px; }

.vtools {
    position: absolute;
    top: 0;
    right: 0;
    display: flex;
    gap: 4px;
    z-index: 1;
}

.vtools span {
    display: flex;
    align-items: center;
    justify-content: center;
    width: 24px;
    height: 23px;
    background: #fff;
}

.vtools path {
    fill: none;
    stroke: #999;
    stroke-width: 1;
}

/* breadcrumb band on top of the tree */
.crumbs {
    display: flex;
    gap: 34.2px;
    height: 44px;
    margin: 5px 7px 0 5px;
    padding: 4px 0 0 142px;
    background: #999;
    border: 1px solid #666;
}

.crumb {
    width: 91px;
}

.crumb-name {
    display: flex;
    justify-content: space-between;
    align-items: center;
    height: 19px;
    padding-bottom: 1px;
    border-bottom: 2px solid #0a7a0a;
    font-size: 15.5px;
    color: #2b2b2b;
    white-space: nowrap;
}

.crumb-name i {
    font: 12px "Liberation Sans", sans-serif;
    color: #c4c4c4;
    padding-right: 1px;
}

.crumb-val {
    font-weight: bold;
    font-size: 14.5px;
    line-height: 17px;
    color: #b5593a;
}

/* tree */
.links {
    position: absolute;
    left: -1px;
    top: -1px;
    width: 851px;
    height: 480px;
    pointer-events: none;
}

.links path { fill: none; stroke-width: 1; }
.lb path { stroke: #533320; }
.lg path { stroke: #0a7a0a; }

.tree {
    display: flex;
    gap: 33.2px;
    position: relative;
    margin-top: 25px;
    padding-left: 22px;
}

.col { width: 92px; }
.col-root { margin-top: 167.6px; }
.col-east { margin-top: 48px; }

.item {
    height: 47.95px;
}

.bar {
    height: 8px;
    background: #727ac9;
    outline: 1px solid rgba(50, 60, 90, 0.5);
    outline-offset: -1px;
}

.sel .bar {
    outline-color: #5f6f63;
}

.fill {
    height: 8px;
    background: #007800;
}

.lbl {
    margin-top: 2px;
    padding-left: 4px;
    font: 9.7px/11px "Open Sans", sans-serif;
    color: #ee8e90;
    white-space: nowrap;
}

.val {
    padding-left: 4px;
    font-size: 14.7px;
    line-height: 14px;
    color: #f06ec4;
    white-space: nowrap;
}

.more {
    position: absolute;
    top: 456px;
}
.more-a { left: 309px; }
.more-b { left: 559px; }
.more path {
    fill: none;
    stroke: #a8a8a8;
    stroke-width: 1;
}

/* filters strip */
.filters {
    width: 33px;
    flex: none;
    padding: 14px 0 0 10px;
    background: #fff;
    border-left: 1px solid #aaa;
    border-right: 1px solid #e1dfdd;
}

.f-ico {
    margin: 17px 0 0 2px;
}

.f-text {
    display: block;
    margin: 7px 0 0 -2px;
    writing-mode: vertical-rl;
    font-size: 14px;
    font-weight: 600;
    color: #252423;
}

/* panels */
.viz, .data {
    position: relative;
    flex: none;
    background: #f3f2f1;
}

.viz {
    width: 181px;
    padding-top: 9px;
    border-right: 1px solid #e8e6e4;
}

.data {
    width: 180px;
    padding-top: 9px;
}

.panel-head {
    display: flex;
    justify-content: space-between;
    align-items: center;
    height: 20px;
    padding: 0 7px 0 9px;
}

.panel-head h2 {
    font-size: 15px;
    font-weight: 600;
    color: #252423;
}

.build {
    margin: 8px 0 0 9px;
    font-size: 11px;
    line-height: 16px;
    font-weight: 600;
    color: #333;
}

.viz-tabs {
    display: flex;
    margin: 3px 0 0 8px;
}

.vt {
    display: flex;
    flex: none;
    align-items: center;
    justify-content: center;
    width: 32px;
    height: 32px;
    margin-right: 34px;
}

.vt-on {
    background: #d2d0ce;
    border-radius: 2px;
}

.vline {
    position: relative;
    height: 1px;
    margin-top: 12px;
    background: #a8a6a4;
}

.vline i {
    position: absolute;
    left: 18px;
    top: -5px;
    width: 10px;
    height: 10px;
    background: #f3f2f1;
    border-left: 1px solid #a8a6a4;
    border-top: 1px solid #a8a6a4;
    transform: rotate(45deg);
}

.vgrid {
    display: grid;
    grid-template-columns: repeat(6, 28px);
    grid-auto-rows: 28px;
    margin: 7px 0 0 7px;
}

.vgrid span {
    display: flex;
    align-items: center;
    justify-content: center;
}

.vgrid svg {
    width: 18px;
    height: 18px;
    overflow: visible;
}

.vgrid .picked {
    width: 24px;
    height: 24px;
    margin: 2px;
    border: 1px solid #252423;
}

.letter {
    font: bold 15px "Open Sans", sans-serif;
    color: #1f7fc4;
}

.letter-py {
    font-size: 17px;
}

.fields {
    position: absolute;
    left: 0;
    right: 0;
    top: 336px;
    bottom: 0;
    padding: 8px 0 0 4px;
    border-top: 1px solid #e1dfdd;
    overflow: hidden;
}

.fields h4 {
    padding-left: 9px;
    font-size: 12px;
    font-weight: 400;
    line-height: 18px;
    color: #333;
}

.well {
    width: 169px;
    margin-top: 4px;
    padding: 3px 2px;
    border: 1px dashed #c8c6c4;
}

.fields .h4-next {
    margin-top: 11px;
}

.well-open {
    margin-top: 3px;
    padding-bottom: 0;
    border-bottom: 0;
}

.pill {
    display: flex;
    align-items: center;
    height: 22px;
    margin-bottom: 3px;
    padding: 0 5px;
    background: #edebe9;
    border: 1px solid #c8c6c4;
    border-radius: 2px;
    font-size: 11.5px;
    color: #333;
}

.well:not(.well-open) .pill { margin-bottom: 0; }

.pill span { flex: 1; }

.pill-x {
    margin-left: 5px;
}

.sb {
    position: absolute;
    background: #d2d0ce;
}
.sb-viz {
    right: 0;
    top: 3px;
    width: 5px;
    height: 91px;
    border-radius: 3px;
}
.sb-data {
    right: 4px;
    top: 180px;
    width: 8px;
    height: 291px;
    background: #c8c6c4;
}

/* data panel */
.search {
    display: flex;
    align-items: center;
    gap: 7px;
    height: 24px;
    margin: 16px 5px 0 5px;
    padding-left: 11px;
    background: #fff;
    border: 1px solid #d2d0ce;
    border-bottom-color: #777;
    border-radius: 4px;
    color: #777;
    font-size: 12.8px;
}

.list {
    list-style: none;
    margin-top: 13px;
}

.list li {
    display: flex;
    align-items: center;
    position: relative;
    height: 24px;
    padding-left: 44px;
    font-size: 11.3px;
    color: #444;
    white-space: nowrap;
}

.cb {
    display: block;
    flex: none;
    width: 12px;
    height: 12px;
    margin-right: 7px;
    background: #f3f2f1;
    border: 1px solid #8a8886;
    border-radius: 2px;
}

.cb.on {
    background: #117865;
    border-color: #117865;
    position: relative;
}

.cb.on::after {
    content: "";
    position: absolute;
    left: 3px;
    top: 1px;
    width: 4px;
    height: 7px;
    border-right: 1.5px solid #fff;
    border-bottom: 1.5px solid #fff;
    transform: rotate(45deg);
}

.ty {
    flex: none;
    width: 20px;
    font-family: "DejaVu Sans", sans-serif;
    font-size: 13px;
    line-height: 14px;
    color: #333;
}

.exp {
    position: absolute;
    left: 31px;
    top: 7px;
}

.exp path {
    fill: none;
    stroke: #8a8886;
    stroke-width: 1;
}
```
